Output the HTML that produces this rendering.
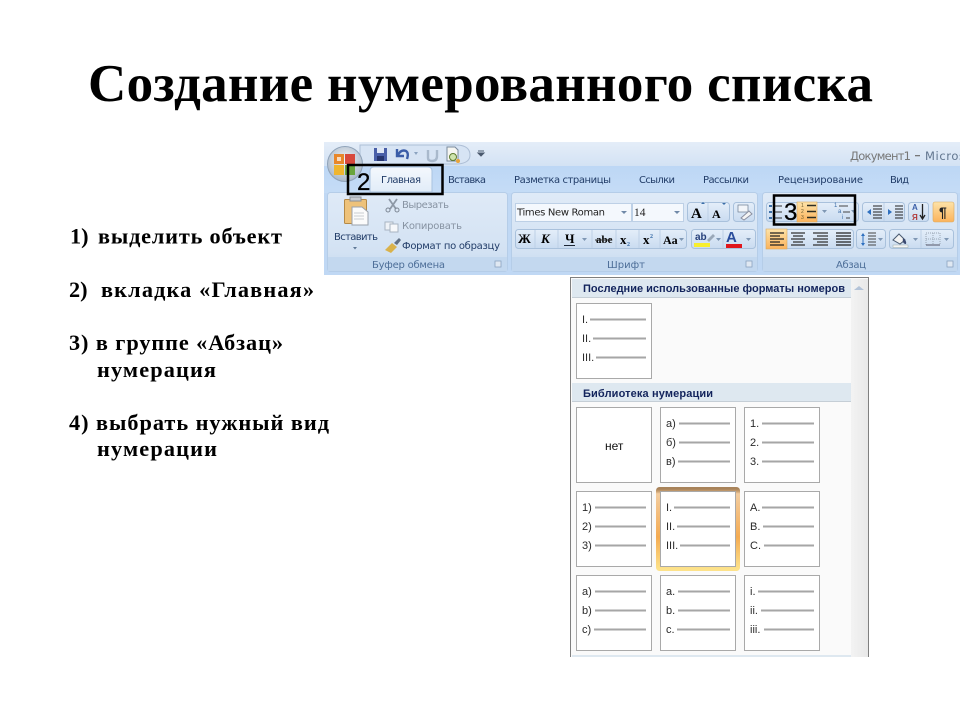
<!DOCTYPE html>
<html lang="ru"><head><meta charset="utf-8"><title>Создание нумерованного списка</title>
<style>
html,body{margin:0;padding:0;background:#fff;width:960px;height:720px;overflow:hidden}
svg{display:block;position:absolute;left:0;top:0}
.s{font-family:"Liberation Serif",serif;font-weight:bold;fill:#000}
.a{font-family:"Liberation Sans",sans-serif}
.r{font-family:"DejaVu Sans",sans-serif}
.bl{stroke:#a6a6a6;stroke-width:2}
.box{fill:#fff;stroke:#a9a9a9;stroke-width:1}
.n{font-family:"Liberation Sans",sans-serif;font-size:11px;fill:#2a2a2a}
</style></head><body>
<svg width="960" height="720" viewBox="0 0 960 720" xmlns="http://www.w3.org/2000/svg">
<defs>
<linearGradient id="tb" x1="0" y1="0" x2="0" y2="1"><stop offset="0" stop-color="#e4edf8"/><stop offset="1" stop-color="#d3e2f4"/></linearGradient>
<linearGradient id="tabs" x1="0" y1="0" x2="0" y2="1"><stop offset="0" stop-color="#bdd7f5"/><stop offset="1" stop-color="#c5dcf6"/></linearGradient>
<linearGradient id="grp" x1="0" y1="0" x2="0" y2="1"><stop offset="0" stop-color="#dfeaf7"/><stop offset=".75" stop-color="#d3e2f3"/><stop offset="1" stop-color="#c6d9f0"/></linearGradient>
<linearGradient id="btn" x1="0" y1="0" x2="0" y2="1"><stop offset="0" stop-color="#e4eef9"/><stop offset="1" stop-color="#c9dbf0"/></linearGradient>
<linearGradient id="or" x1="0" y1="0" x2="0" y2="1"><stop offset="0" stop-color="#fde3a8"/><stop offset="1" stop-color="#fbb35c"/></linearGradient>
<linearGradient id="tabg" x1="0" y1="0" x2="0" y2="1"><stop offset="0" stop-color="#f4f8fd"/><stop offset="1" stop-color="#e1ecf8"/></linearGradient>
<linearGradient id="sel" x1="0" y1="0" x2="0" y2="1"><stop offset="0" stop-color="#a8835a"/><stop offset=".03" stop-color="#c9a070"/><stop offset=".06" stop-color="#f3cda0"/><stop offset=".6" stop-color="#f4ab52"/><stop offset="1" stop-color="#fde28a"/></linearGradient>
<linearGradient id="sb" x1="0" y1="0" x2="1" y2="0"><stop offset="0" stop-color="#f3f3f3"/><stop offset="1" stop-color="#e8e8e8"/></linearGradient>
<radialGradient id="orb" cx=".5" cy=".4" r=".6"><stop offset="0" stop-color="#f4f6f9"/><stop offset="1" stop-color="#a9b8c8"/></radialGradient>
<filter id="b" x="0" y="0" width="100%" height="100%"><feGaussianBlur stdDeviation="0.35"/></filter>
</defs>

<!-- Title -->
<text class="s" x="88" y="101" font-size="53" textLength="785" lengthAdjust="spacing">Создание нумерованного списка</text>

<!-- Body text -->
<g class="s" font-size="22.3">
<text x="70" y="243.5">1)</text><text x="98" y="243.5" textLength="184">выделить объект</text>
<text x="69" y="297">2)</text><text x="101" y="297" textLength="213">вкладка «Главная»</text>
<text x="69" y="350" textLength="214">3) в группе «Абзац»</text>
<text x="97" y="377" textLength="119">нумерация</text>
<text x="69" y="430" textLength="260">4) выбрать нужный вид</text>
<text x="97" y="456" textLength="120">нумерации</text>
</g>

<!-- Ribbon -->
<g filter="url(#b)">
<rect x="324" y="142" width="636" height="133" fill="#c0d8f4"/>
<rect x="324" y="142" width="636" height="24" fill="url(#tb)"/>
<rect x="324" y="166" width="636" height="27" fill="url(#tabs)"/>
<!-- QAT pill -->
<path d="M360 145H458Q470 146 470 155Q470 163 458 164H360Z" fill="#d7e4f4" stroke="#aebfd6"/>
<!-- Orb -->
<circle cx="345" cy="164" r="17.500" fill="url(#orb)" stroke="#8fa2b8"/>
<rect x="334" y="154" width="10" height="10" fill="#e8872a"/><rect x="345" y="154" width="10" height="10" fill="#d8483a"/>
<rect x="334" y="165" width="10" height="10" fill="#efb52e"/><rect x="345" y="165" width="10" height="10" fill="#6aa53a"/>
<rect x="337" y="157" width="4" height="4" fill="#fff" opacity=".7"/>
<!-- QAT icons -->
<rect x="374" y="148" width="13" height="13" fill="#4a5fa8"/><rect x="377" y="148" width="7" height="5" fill="#dfe7f5"/><rect x="377" y="156" width="7" height="5" fill="#27346e"/>
<path d="M397 149v7h7M398 155q3-6 8-4 3 2 1 8" fill="none" stroke="#3a5da8" stroke-width="2.4"/>
<path d="M414 152l2 3 2-3z" fill="#8ba3c0"/>
<path d="M428 150v8q0 3 4 3 5 0 5-5v-6" fill="none" stroke="#a9b9cc" stroke-width="2.4"/>
<path d="M447 147h8l3 3v11h-11z" fill="#f6f6f2" stroke="#7a8a9c"/><circle cx="453" cy="157" r="3.500" fill="#cfe4ad" stroke="#5e7c2e"/><circle cx="458" cy="161" r="2" fill="#e8a33a"/>
<path d="M478 151h6M478 153l3 3 3-3z" stroke="#4c5a6e" fill="#4c5a6e"/>
<!-- Title text -->
<text class="r" x="850" y="160" font-size="11.500" fill="#777" textLength="61">Документ1</text>
<rect x="915" y="155" width="5" height="1.300" fill="#777"/>
<text class="r" x="925" y="160" font-size="11.500" fill="#62768f" textLength="40">Micros</text>
<!-- Tab -->
<path d="M370 192V171Q370 167 374 167H428Q432 167 432 171V192Z" fill="url(#tabg)" stroke="#a9c3e0"/>
<g class="r" font-size="10" fill="#213c68">
<text x="381" y="183" textLength="40">Главная</text>
<text x="448" y="183" textLength="38">Вставка</text>
<text x="514" y="183" textLength="97">Разметка страницы</text>
<text x="639" y="183" textLength="36">Ссылки</text>
<text x="703" y="183" textLength="46">Рассылки</text>
<text x="778" y="183" textLength="85">Рецензирование</text>
<text x="890" y="183" textLength="19">Вид</text>
</g>
<!-- Groups -->
<rect x="327.500" y="192.500" width="180" height="79" rx="3" fill="url(#grp)" stroke="#b5cde8"/>
<rect x="511.500" y="192.500" width="246" height="79" rx="3" fill="url(#grp)" stroke="#b5cde8"/>
<rect x="762.500" y="192.500" width="195" height="79" rx="3" fill="url(#grp)" stroke="#b5cde8"/>
<rect x="328" y="257" width="179" height="14" fill="#c3d8ef"/><rect x="512" y="257" width="245" height="14" fill="#c3d8ef"/><rect x="763" y="257" width="194" height="14" fill="#c3d8ef"/>
<g class="r" font-size="10" fill="#4d6e98">
<text x="372" y="268" textLength="73">Буфер обмена</text>
<text x="607" y="268" textLength="38">Шрифт</text>
<text x="836" y="268" textLength="30">Абзац</text>
</g>
<g fill="#dfe8f2" stroke="#8ba3c0" stroke-width=".8"><rect x="495" y="261" width="6" height="6"/><rect x="746" y="261" width="6" height="6"/><rect x="947" y="261" width="6" height="6"/></g>
<!-- Clipboard -->
<rect x="344.500" y="199.500" width="22" height="24" rx="1" fill="#eec27a" stroke="#b58a46"/>
<rect x="350" y="197" width="11" height="4" fill="#c8ccd2" stroke="#8a8f96"/>
<path d="M352 207h10l6 5v13h-16z" fill="#fbfbfb" stroke="#9aa2ac"/>
<path d="M354 213h10M354 216h10M354 219h10" stroke="#c8ccd2"/>
<text class="r" x="334" y="240" font-size="10" fill="#213c68" textLength="44">Вставить</text>
<path d="M353 247l2 2.500 2-2.500z" fill="#5f7896"/>
<path d="M389 199l7 10M397 199l-7 10" stroke="#8d98a6" stroke-width="1.800"/><circle cx="388" cy="210" r="2" fill="none" stroke="#7e8896"/><circle cx="397" cy="210" r="2" fill="none" stroke="#7e8896"/>
<text class="r" x="402" y="208" font-size="10" fill="#8793a2" textLength="47">Вырезать</text>
<rect x="385" y="222" width="8" height="8" fill="#eef2f7" stroke="#a8b4c2"/><rect x="390" y="224" width="8" height="8" fill="#f6f8fb" stroke="#a8b4c2"/>
<text class="r" x="402" y="229" font-size="10" fill="#8793a2" textLength="60">Копировать</text>
<path d="M385 250l7-7 5 4-6 6z" fill="#d9b24c"/><path d="M394 243l5-5 2 2-4 5z" fill="#5f6f86"/>
<text class="r" x="402" y="249" font-size="10" fill="#213c68" textLength="98">Формат по образцу</text>

<!-- Font controls -->
<rect x="515.500" y="203.500" width="116" height="18" fill="#f4f8fd" stroke="#bdd0e6"/>
<text class="r" x="517" y="215.500" font-size="10" fill="#222" textLength="88">Times New Roman</text>
<path d="M621 211h6l-3 3z" fill="#6f89a8"/>
<rect x="632.500" y="203.500" width="51" height="18" fill="#f4f8fd" stroke="#bdd0e6"/>
<text x="634" y="216" font-size="11.500" font-family="Liberation Serif, serif" fill="#222">14</text>
<path d="M674 211h6l-3 3z" fill="#6f89a8"/>
<rect x="687.500" y="202.500" width="42" height="19" rx="3" fill="url(#btn)" stroke="#a9c1dc"/>
<line x1="708" y1="203" x2="708" y2="221" stroke="#bdd0e6"/>
<text class="s" x="691" y="218" font-size="15" fill="#1f2a3a">A</text><text class="s" x="712" y="218" font-size="12" fill="#1f2a3a">A</text>
<path d="M701 204l2-2 2 2zM722 203l2 2 2-2z" fill="#3a6ea8"/>
<rect x="733.500" y="202.500" width="21" height="19" rx="3" fill="url(#btn)" stroke="#a9c1dc"/>
<rect x="738" y="205" width="10" height="7" fill="#f2f5f9" stroke="#6a7b90" stroke-width=".7"/><path d="M741 218l8-7 3 3-8 6z" fill="#f4f4f4" stroke="#8a8fa0"/>

<rect x="515.500" y="229.500" width="171" height="19" rx="3" fill="url(#btn)" stroke="#a9c1dc"/>
<g stroke="#bdd0e6"><line x1="535" y1="230" x2="535" y2="248"/><line x1="558" y1="230" x2="558" y2="248"/><line x1="592" y1="230" x2="592" y2="248"/><line x1="616" y1="230" x2="616" y2="248"/><line x1="639" y1="230" x2="639" y2="248"/><line x1="660" y1="230" x2="660" y2="248"/></g>
<g class="s" fill="#1c2636">
<text x="518" y="243" font-size="13">Ж</text>
<text x="541" y="243" font-size="13" font-style="italic">К</text>
<text x="565" y="243" font-size="13">Ч</text>
<text x="596" y="243" font-size="11">abe</text>
<text x="620" y="244" font-size="13">x</text><text x="627" y="246" font-size="6" fill="#3a6ea8">2</text>
<text x="643" y="244" font-size="13">x</text><text x="650" y="238" font-size="6" fill="#3a6ea8">2</text>
<text x="663" y="244" font-size="12">Aa</text>
</g>
<line x1="564" y1="245.500" x2="575" y2="245.500" stroke="#1c2636"/><line x1="595" y1="240" x2="612" y2="240" stroke="#333"/>
<path d="M582 238h5l-2.500 3zM679 238h5l-2.500 3z" fill="#7f97b4"/>
<rect x="691.500" y="229.500" width="64" height="19" rx="3" fill="url(#btn)" stroke="#a9c1dc"/>
<line x1="723" y1="230" x2="723" y2="248" stroke="#bdd0e6"/>
<text class="a" x="695" y="240" font-size="10" font-weight="bold" fill="#28407a">ab</text>
<path d="M707 240l6-6 2 2-6 6z" fill="#9aa8b8"/>
<rect x="694" y="243" width="16" height="4" fill="#f7ee2e"/>
<path d="M716 238h5l-2.500 3zM746 238h5l-2.500 3z" fill="#7f97b4"/>
<text class="a" x="726" y="242" font-size="15" font-weight="bold" fill="#2a4e9c">A</text>
<rect x="726" y="244" width="16" height="4" fill="#e0141a"/>

<!-- Paragraph controls row 1 -->
<rect x="766.500" y="202.500" width="92" height="19" rx="3" fill="url(#btn)" stroke="#a9c1dc"/>
<g fill="#3d6fa8"><rect x="769" y="205" width="3" height="2"/><rect x="769" y="211" width="3" height="2"/><rect x="769" y="217" width="3" height="2"/></g>
<path d="M774 206h8M774 212h8M774 218h8" stroke="#333"/>
<rect x="797" y="202" width="20" height="20" fill="url(#or)" stroke="#d9a960" stroke-width=".6"/>
<g font-size="5" class="a" fill="#6b5a2c"><text x="801" y="207">1</text><text x="801" y="213">2</text><text x="801" y="219">3</text></g>
<path d="M807 205.500h9M807 211.500h9M807 217.500h9" stroke="#2e2e24" stroke-width="1.500"/>
<path d="M822 210h5l-2.500 3zM851 210h5l-2.500 3z" fill="#7f97b4"/>
<g font-size="6" class="a" fill="#3d6fa8"><text x="834" y="207">1</text><text x="838" y="213">a</text><text x="842" y="219">i</text></g>
<path d="M839 206h9M843 212h7M846 218h4" stroke="#444"/>
<rect x="862.500" y="202.500" width="42" height="19" rx="3" fill="url(#btn)" stroke="#a9c1dc"/>
<line x1="884" y1="203" x2="884" y2="221" stroke="#bdd0e6"/>
<path d="M873 206h9M873 209h9M873 212h9M873 215h9M873 218h9M895 206h8M895 209h8M895 212h8M895 215h8M895 218h8" stroke="#222" stroke-width="1.100"/>
<path d="M871 209l-4 3 4 3zM888 209l4 3-4 3z" fill="#2f70c0"/>
<rect x="908.500" y="202.500" width="20" height="19" rx="3" fill="url(#btn)" stroke="#a9c1dc"/>
<text class="a" x="912" y="210" font-size="8" font-weight="bold" fill="#3a5fa8">A</text>
<text class="a" x="912" y="220" font-size="8" font-weight="bold" fill="#b23a3a">Я</text>
<path d="M922.500 204v14M920 215l2.500 4 2.500-4" fill="none" stroke="#222" stroke-width="1.300"/>
<rect x="933" y="202" width="21" height="20" rx="2" fill="url(#or)" stroke="#d9a960" stroke-width=".6"/>
<text class="a" x="939" y="217" font-size="14" font-weight="bold" fill="#222">¶</text>

<!-- Paragraph controls row 2 -->
<rect x="766.500" y="229.500" width="87" height="19" rx="3" fill="url(#btn)" stroke="#a9c1dc"/>
<rect x="766" y="229" width="21" height="20" fill="url(#or)" stroke="#d9a960" stroke-width=".6"/>
<path d="M770 233h14M770 236h10M770 239h14M770 242h10M770 245h14" stroke="#222" stroke-width="1.300"/>
<path d="M791 233h14M793 236h10M791 239h14M793 242h10M791 245h14" stroke="#333" stroke-width="1.300"/>
<path d="M813 233h15M817 236h11M813 239h15M817 242h11M813 245h15" stroke="#333" stroke-width="1.300"/>
<path d="M836 233h15M836 236h15M836 239h15M836 242h15M836 245h15" stroke="#222" stroke-width="1.300"/>
<rect x="856.500" y="229.500" width="29" height="19" rx="3" fill="url(#btn)" stroke="#a9c1dc"/>
<path d="M863 233l-2 3h4zM863 246l-2-3h4z" fill="#2f70c0"/><line x1="863" y1="236" x2="863" y2="243" stroke="#2f70c0"/>
<path d="M868 233h8M868 236h8M868 239h8M868 242h8M868 245h8" stroke="#444"/>
<path d="M878 238h5l-2.500 3z" fill="#7f97b4"/>
<rect x="889.500" y="229.500" width="64" height="19" rx="3" fill="url(#btn)" stroke="#a9c1dc"/>
<line x1="921" y1="230" x2="921" y2="248" stroke="#bdd0e6"/>
<path d="M893 240l6-6 6 6-5 4z" fill="#f4f4f4" stroke="#4a5a70"/><path d="M903 238q4 3 3 6-4 0-3-6z" fill="#3a4a70"/>
<rect x="893" y="245" width="15" height="2.500" fill="#f4f4f4" stroke="#9aa" stroke-width=".5"/>
<path d="M913 238h5l-2.500 3zM944 238h5l-2.500 3z" fill="#7f97b4"/>
<rect x="926" y="233" width="14" height="12" fill="none" stroke="#9aa6b4" stroke-dasharray="1 1"/><path d="M933 233v12M926 239h14" stroke="#9aa6b4" stroke-dasharray="1 1"/><line x1="926" y1="245" x2="940" y2="245" stroke="#556"/>
</g>

<!-- Callout boxes -->
<rect x="348" y="165" width="94.500" height="29" fill="none" stroke="#000" stroke-width="2.500"/>
<text class="a" x="357" y="190" font-size="24" fill="#000" stroke="#000" stroke-width=".3">2</text>
<rect x="774" y="195.500" width="81" height="29" fill="none" stroke="#000" stroke-width="2.500"/>
<text class="a" x="784" y="220" font-size="24" fill="#000" stroke="#000" stroke-width=".3">3</text>

<!-- Numbering popup -->
<rect x="570.500" y="277.500" width="298" height="390" fill="#fafafa" stroke="#7f7f7f"/>
<rect x="851" y="279" width="17" height="378" fill="url(#sb)"/>
<path d="M854 290l5-4 5 4z" fill="#b3c3d8"/>
<rect x="572" y="279" width="279" height="18" fill="#dee8f0"/><line x1="572" y1="297.500" x2="851" y2="297.500" stroke="#c5ced6"/>
<text class="a" x="583" y="292" font-size="11" font-weight="bold" fill="#13245c" textLength="262">Последние использованные форматы номеров</text>
<rect x="572" y="383" width="279" height="18" fill="#dee8f0"/><line x1="572" y1="401.500" x2="851" y2="401.500" stroke="#c5ced6"/>
<text class="a" x="583" y="397" font-size="11" font-weight="bold" fill="#13245c" textLength="130">Библиотека нумерации</text>
<rect x="572" y="655" width="279" height="2" fill="#dee8f0"/>

<rect class="box" x="576.500" y="303.500" width="75" height="75"/>
<g class="n"><text x="582" y="323">I.</text><text x="582" y="342">II.</text><text x="582" y="361">III.</text></g>
<path class="bl" d="M590 319.500h56M593 338.500h53M596 357.500h50"/>

<rect class="box" x="576.500" y="407.500" width="75" height="75"/>
<text class="a" x="605" y="450" font-size="12" fill="#111">нет</text>
<rect class="box" x="660.500" y="407.500" width="75" height="75"/>
<g class="n"><text x="666" y="427">а)</text><text x="666" y="446">б)</text><text x="666" y="465">в)</text></g>
<path class="bl" d="M679 423.500h51M679 442.500h51M678 461.500h52"/>
<rect class="box" x="744.500" y="407.500" width="75" height="75"/>
<g class="n"><text x="750" y="427">1.</text><text x="750" y="446">2.</text><text x="750" y="465">3.</text></g>
<path class="bl" d="M762 423.500h52M762 442.500h52M762 461.500h52"/>

<rect class="box" x="576.500" y="491.500" width="75" height="75"/>
<g class="n"><text x="582" y="511">1)</text><text x="582" y="530">2)</text><text x="582" y="549">3)</text></g>
<path class="bl" d="M595 507.500h51M595 526.500h51M595 545.500h51"/>

<rect x="658" y="489" width="80" height="80" rx="1.500" fill="none" stroke="url(#sel)" stroke-width="4"/>
<rect class="box" x="660.500" y="491.500" width="75" height="75"/>
<g class="n"><text x="666" y="511">I.</text><text x="666" y="530">II.</text><text x="666" y="549">III.</text></g>
<path class="bl" d="M674 507.500h56M677 526.500h53M680 545.500h50"/>

<rect class="box" x="744.500" y="491.500" width="75" height="75"/>
<g class="n"><text x="750" y="511">A.</text><text x="750" y="530">B.</text><text x="750" y="549">C.</text></g>
<path class="bl" d="M762 507.500h52M763 526.500h51M764 545.500h50"/>

<rect class="box" x="576.500" y="575.500" width="75" height="75"/>
<g class="n"><text x="582" y="595">a)</text><text x="582" y="614">b)</text><text x="582" y="633">c)</text></g>
<path class="bl" d="M595 591.500h51M595 610.500h51M594 629.500h52"/>
<rect class="box" x="660.500" y="575.500" width="75" height="75"/>
<g class="n"><text x="666" y="595">a.</text><text x="666" y="614">b.</text><text x="666" y="633">c.</text></g>
<path class="bl" d="M678 591.500h52M678 610.500h52M677 629.500h53"/>
<rect class="box" x="744.500" y="575.500" width="75" height="75"/>
<g class="n"><text x="750" y="595">i.</text><text x="750" y="614">ii.</text><text x="750" y="633">iii.</text></g>
<path class="bl" d="M758 591.500h56M761 610.500h53M764 629.500h50"/>

<rect x="560" y="657" width="320" height="20" fill="#fff"/>
</svg>
</body></html>
